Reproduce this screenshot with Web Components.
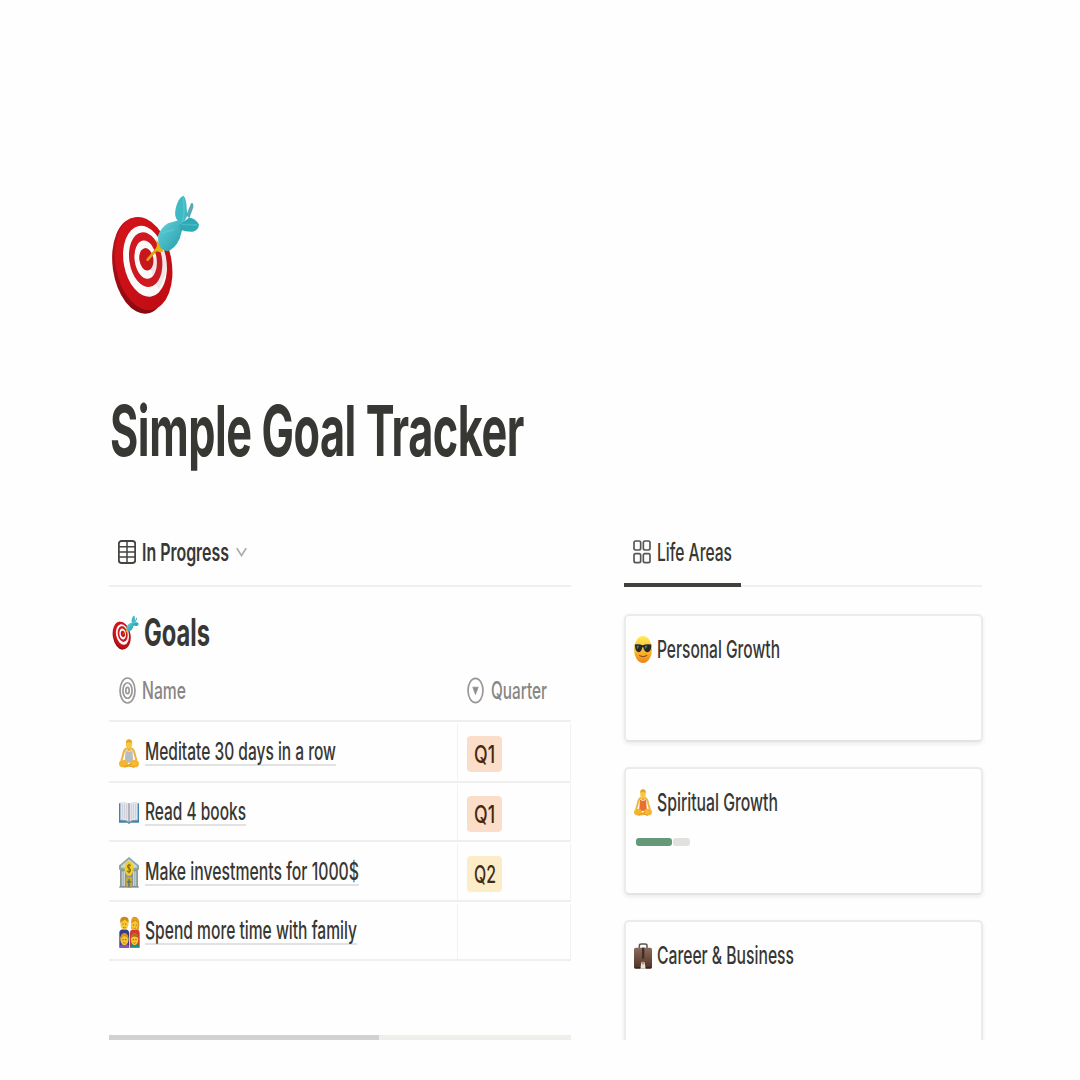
<!DOCTYPE html>
<html lang="en">
<head>
<meta charset="utf-8">
<title>Simple Goal Tracker</title>
<style>
html,body{margin:0;background:#fefefe}
body{width:1080px;height:1080px;overflow:hidden;font-family:Inter,"Liberation Sans",sans-serif;color:#373734}
</style>
</head>
<body>
<goal-page></goal-page>
<script>
const define = (name, html, ready) => {
  const t = document.createElement('template');
  t.innerHTML = html;
  customElements.define(name, class extends HTMLElement {
    connectedCallback() {
      if (this.shadowRoot) return;
      this.attachShadow({mode: 'open'}).append(t.content.cloneNode(true));
      if (ready) ready(this, this.shadowRoot);
    }
  });
};

/* Condensed label: its text is fitted to the width w at font size s. */
define('fit-text', `<style>
:host{display:block;flex:none;white-space:nowrap;line-height:26px}
:host([link]){box-shadow:0 2px #e2e2e1}
span{display:inline-block;transform-origin:0 50%}
</style><span></span>`, (host, root) => {
  const s = root.querySelector('span');
  s.textContent = host.getAttribute('text');
  host.style.fontSize = host.getAttribute('s') + 'px';
  host.style.fontWeight = host.getAttribute('wt') || 530;
  const w = +host.getAttribute('w');
  host.style.width = w + 'px';
  s.style.transform = 'scaleX(' + w / s.getBoundingClientRect().width + ')';
});

const art = {
target: ['60 40 270 365', `<defs><linearGradient id="r" x1="0" y1="0" x2=".7" y2="1"><stop offset="0" stop-color="#d6151b"/><stop offset="1" stop-color="#c00c14"/></linearGradient><linearGradient id="d" x1="0" y1="0" x2="0" y2="1"><stop offset="0" stop-color="#c21219"/><stop offset="1" stop-color="#850b11"/></linearGradient><linearGradient id="b" x1="0" y1="0" x2="1" y2="1"><stop offset="0" stop-color="#68d4dc"/><stop offset="1" stop-color="#219aa9"/></linearGradient></defs>
<ellipse cx="151" cy="256" rx="83" ry="146" transform="rotate(-8 151 256)" fill="url(#d)"/>
<ellipse cx="161" cy="250" rx="84" ry="142" transform="rotate(-10 161 250)" fill="url(#r)"/>
<ellipse cx="165" cy="243" rx="64" ry="108" transform="rotate(-10 165 243)" fill="#fbfafa"/>
<ellipse cx="167" cy="238" rx="49" ry="83" transform="rotate(-9 167 238)" fill="#cf1820"/>
<ellipse cx="167" cy="238" rx="33" ry="58" transform="rotate(-8 167 238)" fill="#fbfafa"/>
<ellipse cx="169" cy="237" rx="21" ry="34" transform="rotate(-8 169 237)" fill="#c9151c"/>
<path d="M177 244L216 212L232 212Q235 280 206 328Q190 300 177 244Z" fill="#844" opacity=".1"/>
<path d="M173 238L205 201" stroke="#d9a311" stroke-width="8" stroke-linecap="round"/>
<path d="M199 176L221 213L211 216L195 211Q204 198 199 176Z" fill="#e5b310"/>
<path d="M204 166Q211 143 234 128L266 119L279 139L269 175Q254 207 231 213Q220 212 212 202Q203 190 204 166Z" fill="url(#b)"/>
<path d="M289 104L303 68Q311 63 310 80L298 113Z" fill="#5ba9b1"/>
<path d="M266 124Q251 112 257 84Q265 50 280 45Q290 53 290 86Q294 100 290 110L277 131Z" fill="#3fb9c4"/>
<path d="M269 132L297 112Q315 113 327 132Q326 150 308 154Q289 155 270 148Z" fill="#2fa9b5"/>
<path d="M280 50Q285 86 278 126M274 132L322 133M218 157L254 147" stroke="#83dbe1" stroke-width="5" fill="none" opacity=".3"/>`],
table: ['0 0 54 72', `<rect x="2.5" y="3" width="49" height="66" rx="8" fill="none" stroke="#444441" stroke-width="5.5"/><path d="M3 20H51M3 36H51M3 51H51M27 4V69" stroke="#444441" stroke-width="4.5"/>`],
grid: ['0 0 54 72', `<g fill="none" stroke="#555552" stroke-width="5"><rect x="3" y="3" width="20" height="27" rx="5"/><rect x="31" y="3" width="20" height="27" rx="5"/><rect x="3" y="41" width="20" height="27" rx="5"/><rect x="31" y="41" width="20" height="27" rx="5"/></g>`],
chevron: ['0 0 28 28', `<path d="M2 3L14 24L26 3" fill="none" stroke="#acaba9" stroke-width="4.5"/>`],
rings: ['0 0 50 80', `<g fill="none" stroke="#999896" stroke-width="5"><ellipse cx="25" cy="40" rx="22" ry="37"/><ellipse cx="25" cy="40" rx="13.5" ry="23"/><ellipse cx="25" cy="40" rx="5" ry="9"/></g>`],
select: ['0 0 50 80', `<ellipse cx="25" cy="40" rx="22" ry="36" fill="none" stroke="#999896" stroke-width="5"/><path d="M17 30H33L25 52Z" fill="#8f8e8c" stroke="#8f8e8c" stroke-width="2" stroke-linejoin="round"/>`],
monk: ['0 0 58 88', `<path d="M23 28Q14 32 12 48L7 66M35 28Q44 32 46 48L51 66" fill="none" stroke="#eeb440" stroke-width="6"/><path d="M24 24H34V36H24Z" fill="#e9a92f"/><path d="M19 33Q29 43 39 33L40 52L42 72H16L18 52Z" fill="var(--cloth,#b9bbc0)"/><ellipse cx="13" cy="75" rx="13" ry="11" fill="#f3b52f"/><ellipse cx="45" cy="75" rx="13" ry="11" fill="#f3b52f"/><path d="M13 86L38 70Q49 71 45 79L27 86Z" fill="#f7bd37"/><path d="M15 85L38 75M30 82L45 86" stroke="#d58a17" stroke-width="2.5" fill="none"/><ellipse cx="29" cy="16" rx="9" ry="14" fill="#f9c73e"/><path d="M20 12Q20 1 29 1Q38 1 38 12Q29 7 20 12Z" fill="#e2a527"/>`],
book: ['0 0 58 70', `<path d="M0 7H58V66H34L29 70L24 66H0Z" fill="#3d87ae"/><path d="M4 3Q18 0 29 7Q40 0 54 3V58Q39 56 29 64Q18 56 4 58Z" fill="#e4e6ed"/><path d="M29 7V64" stroke="#85858b" stroke-width="3"/><path d="M10 9V54M16 9V54M22 10V55M36 10V55M42 9V54M48 9V54" stroke="#c5c7d1" stroke-width="2"/><path d="M4 59Q19 57 29 65Q39 57 54 59" fill="none" stroke="#8d9aa5" stroke-width="3"/>`],
bank: ['0 0 58 92', `<path d="M3 34H55V90H3Z" fill="#87969a"/><path d="M8 42H17V86H8ZM41 42H50V86H41Z" fill="#d7dddb"/><path d="M12 41V87M46 41V87" stroke="#77868a" stroke-width="2"/><path d="M21 60H38V90H21Z" fill="#d7a920"/><path d="M29 66V90M23 74H36" stroke="#3d7289" stroke-width="4"/><path d="M29 0L58 25V38H0V25Z" fill="#8da5a0"/><path d="M29 7L52 27V32H6V27Z" fill="#ced8d4"/><path d="M0 89H58" stroke="#7b898d" stroke-width="3"/><ellipse cx="29" cy="34" rx="13" ry="22" fill="#f1cf28"/><path d="M34 26Q29 20 25 26Q24 32 30 34Q36 38 32 43Q27 47 23 41M29 20V48" stroke="#846b14" stroke-width="3" fill="none"/>`],
family: ['0 0 62 96', `<path d="M1 47Q5 39 16 40Q28 40 30 50V95H1Z" fill="#313f91"/><path d="M32 50Q34 39 47 40Q60 40 61 50V95H32Z" fill="#d33931"/><path d="M36 39V16Q36 2 47 2Q61 4 60 28L58 42Z" fill="#e09820"/><ellipse cx="16" cy="22" rx="12" ry="19" fill="#f8c832"/><path d="M4 20Q1 1 16 2Q31 1 28 20Q20 9 14 13Z" fill="#c88b18"/><ellipse cx="46" cy="25" rx="10" ry="17" fill="#f9c735"/><path d="M36 22Q40 7 46 10Q55 10 57 23L49 14Z" fill="#df8c1e"/><path d="M2 94Q4 82 16 83Q29 82 30 94Z" fill="#8754b0"/><path d="M33 94Q35 82 47 83Q59 82 60 94Z" fill="#179182"/><ellipse cx="16" cy="70" rx="12" ry="18" fill="#f8c530"/><path d="M4 69Q5 51 16 52Q27 51 28 69Q19 59 15 60Z" fill="#d99024"/><ellipse cx="46" cy="70" rx="11" ry="18" fill="#f8c530"/><path d="M35 66Q36 51 46 51Q57 51 57 66Q46 57 35 66Z" fill="#a87319"/><g fill="#6c481d"><circle cx="12" cy="24" r="1.7"/><circle cx="20" cy="24" r="1.7"/><circle cx="43" cy="27" r="1.7"/><circle cx="51" cy="27" r="1.7"/><circle cx="12" cy="71" r="1.7"/><circle cx="20" cy="71" r="1.7"/><circle cx="42" cy="71" r="1.7"/><circle cx="50" cy="71" r="1.7"/></g><path d="M12 34Q16 37 20 34M43 36Q47 39 50 36M12 80Q16 83 20 80M42 80Q46 83 50 80" stroke="#a35e18" stroke-width="2" fill="none"/>`],
cool: ['0 0 52 82', `<defs><linearGradient id="f" x1="0" y1="0" x2="0" y2="1"><stop offset="0" stop-color="#ffec54"/><stop offset=".6" stop-color="#fbb52b"/><stop offset="1" stop-color="#ed8018"/></linearGradient></defs><ellipse cx="26" cy="41" rx="26" ry="41" fill="url(#f)"/><path d="M2 26Q14 23 25 28Q36 23 50 26V32Q48 50 38 49Q29 48 27 34H24Q22 48 14 49Q5 49 3 33Z" fill="#25282c"/><path d="M7 30L15 29L10 40ZM31 30L39 29L34 40Z" fill="#68717a"/><path d="M15 59Q27 67 38 58" fill="none" stroke="#86501a" stroke-width="3"/>`],
bag: ['0 0 54 78', `<defs><linearGradient id="g" x1="0" x2="0" y1="0" y2="1"><stop offset="0" stop-color="#8b6c5c"/><stop offset="1" stop-color="#4f3027"/></linearGradient></defs><path d="M16 16V8Q16 3 22 3H33Q39 3 39 8V16" fill="none" stroke="#5c5550" stroke-width="4.5"/><rect y="14" width="54" height="63" rx="5" fill="url(#g)"/><path d="M24 14H31V47H24Z" fill="#412d27"/><path d="M22 58H32L35 77H19Z" fill="#e7e4dd"/><path d="M24 56H31V64H24Z" fill="#b49561"/><path d="M2 74H19M35 74H52" stroke="#302824" stroke-width="4"/>`]
};
define('app-icon', `<style>:host{display:block;flex:none}svg{display:block;width:100%;height:100%}</style><svg preserveAspectRatio="none"></svg>`, (host, root) => {
  const [vb, body] = art[host.getAttribute('name')];
  const svg = root.querySelector('svg');
  svg.setAttribute('viewBox', vb);
  svg.innerHTML = body;
  host.style.width = host.getAttribute('w') + 'px';
  host.style.height = host.getAttribute('h') + 'px';
});

define('tab-bar', `<style>
:host{display:flex;box-sizing:border-box;height:67px;border-bottom:2px solid #efefee;--line:transparent}
div{display:flex;align-items:center;box-sizing:border-box;height:67px;padding:0 9px 0;border-bottom:4px solid var(--line)}
</style><div><slot></slot></div>`);

define('quarter-tag', `<style>
:host{display:flex;align-items:center;justify-content:center;width:35px;height:36px;border-radius:4px;background:#fadec9;color:#49290e}
:host([tone=yellow]){background:#fdecc8;color:#402c1b}
</style><slot></slot>`);

define('goal-row', `<style>
:host{display:flex;box-sizing:border-box;border-bottom:2px solid #efefee}
.name{display:flex;align-items:center;width:348px;padding:0 0 1px 9px;box-sizing:border-box}
.q{display:flex;align-items:center;width:114px;padding:3px 0 0 9px;box-sizing:border-box;margin-top:2px;border:solid #f2f2f1;border-width:0 1px}
:host([head]) .q{border-color:transparent;padding:0 0 1px 9px;margin:0}
</style><div class="name"><slot></slot></div><div class="q"><slot name="quarter"></slot></div>`);

define('area-card', `<style>
:host{display:block;box-sizing:border-box;height:128px;flex:none;border:2px solid #ebebea;border-bottom-color:#e3e3e2;border-radius:5px;padding:17px 8px 0;box-shadow:0 2px 4px rgba(15,15,15,.08)}
.head{display:flex;align-items:center;height:32px}
</style><div class="head"><slot></slot></div><slot name="body"></slot>`);

define('progress-bar', `<style>
:host{display:flex;gap:1px;margin:20px 0 0 2px;height:8px}
i{border-radius:3px;width:17px;background:#e1e1df}.done{width:36px;background:#659879}
</style><i class="done"></i><i></i>`);

define('goal-page', `<style>
:host{display:flex;flex-direction:column;box-sizing:border-box;width:1080px;height:1080px;padding:194px 98px 0 109px}
.hero{margin-left:1px}
.title{display:flex;align-items:center;margin-top:71px;height:90px;padding-left:1px}
.title fit-text{letter-spacing:-.01em}
.cols{display:flex;gap:53px;height:520px;overflow:hidden;padding:0 4px;margin:44px -4px 0}
.left{display:flex;flex-direction:column;width:462px;flex:none}
.heading{display:flex;align-items:center;height:59px;margin-top:16px;padding-left:3px;gap:5px}
.heading fit-text{margin-bottom:2px}
.scroll{display:flex;height:5px;margin-top:auto;background:#eeeeeb}
.scroll i{width:270px;background:#d1d1cf}
.right{display:flex;flex-direction:column;width:358px;flex:none}
.right tab-bar{--line:#40403d}
.cards{display:flex;flex-direction:column;gap:25px;margin:27px -1px 0 0}
.head{height:60px;color:#878683}
</style>
<app-icon class="hero" name="target" w="90" h="121"></app-icon>
<div class="title"><fit-text text="Simple Goal Tracker" s="70.5" w="414" wt="700"></fit-text></div>
<div class="cols">
<section class="left">
<tab-bar><app-icon name="table" w="18" h="24"></app-icon><fit-text style="margin-left:6px" text="In Progress" s="24.5" w="87" wt="620"></fit-text><app-icon style="margin-left:7px" name="chevron" w="11" h="10"></app-icon></tab-bar>
<div class="heading"><app-icon name="target" w="27" h="35"></app-icon><fit-text text="Goals" s="38" w="66" wt="700"></fit-text></div>
<goal-row head class="head"><app-icon style="margin-left:1px" name="rings" w="17" h="27"></app-icon><fit-text style="margin-left:6px" text="Name" s="24" w="44" wt="500"></fit-text><app-icon slot="quarter" name="select" w="17" h="27"></app-icon><fit-text slot="quarter" style="margin-left:7px" text="Quarter" s="24" w="56" wt="500"></fit-text></goal-row>
<goal-row style="height:61px"><app-icon style="margin:4px 6px 0 1px" name="monk" w="20" h="29"></app-icon><fit-text link text="Meditate 30 days in a row" s="24.5" w="191"></fit-text><quarter-tag slot="quarter"><fit-text text="Q1" s="24.5" w="21" wt="480"></fit-text></quarter-tag></goal-row>
<goal-row style="height:59px"><app-icon style="margin:2px 6px 0 1px" name="book" w="20" h="23"></app-icon><fit-text link text="Read 4 books" s="24.5" w="101"></fit-text><quarter-tag slot="quarter"><fit-text text="Q1" s="24.5" w="21" wt="480"></fit-text></quarter-tag></goal-row>
<goal-row style="height:60px"><app-icon style="margin:3px 6px 0 1px" name="bank" w="20" h="31"></app-icon><fit-text link text="Make investments for 1000$" s="24.5" w="214"></fit-text><quarter-tag slot="quarter" tone="yellow"><fit-text text="Q2" s="24.5" w="22" wt="480"></fit-text></quarter-tag></goal-row>
<goal-row style="height:59px"><app-icon style="margin:3px 5px 0 1px" name="family" w="21" h="32"></app-icon><fit-text link text="Spend more time with family" s="24.5" w="212"></fit-text></goal-row>
<div class="scroll"><i></i></div>
</section>
<section class="right">
<tab-bar><app-icon name="grid" w="18" h="24"></app-icon><fit-text style="margin-left:6px" text="Life Areas" s="24.5" w="75"></fit-text></tab-bar>
<div class="cards">
<area-card><app-icon name="cool" w="18" h="27"></app-icon><fit-text style="margin-left:5px" text="Personal Growth" s="24.5" w="123"></fit-text></area-card>
<area-card><app-icon style="--cloth:#e8702a" name="monk" w="18" h="27"></app-icon><fit-text style="margin-left:5px" text="Spiritual Growth" s="24.5" w="121"></fit-text><progress-bar slot="body"></progress-bar></area-card>
<area-card><app-icon style="margin-top:2px" name="bag" w="18" h="26"></app-icon><fit-text style="margin-left:5px" text="Career &amp; Business" s="24.5" w="137"></fit-text></area-card>
</div>
</section>
</div>`);
</script>
</body>
</html>
